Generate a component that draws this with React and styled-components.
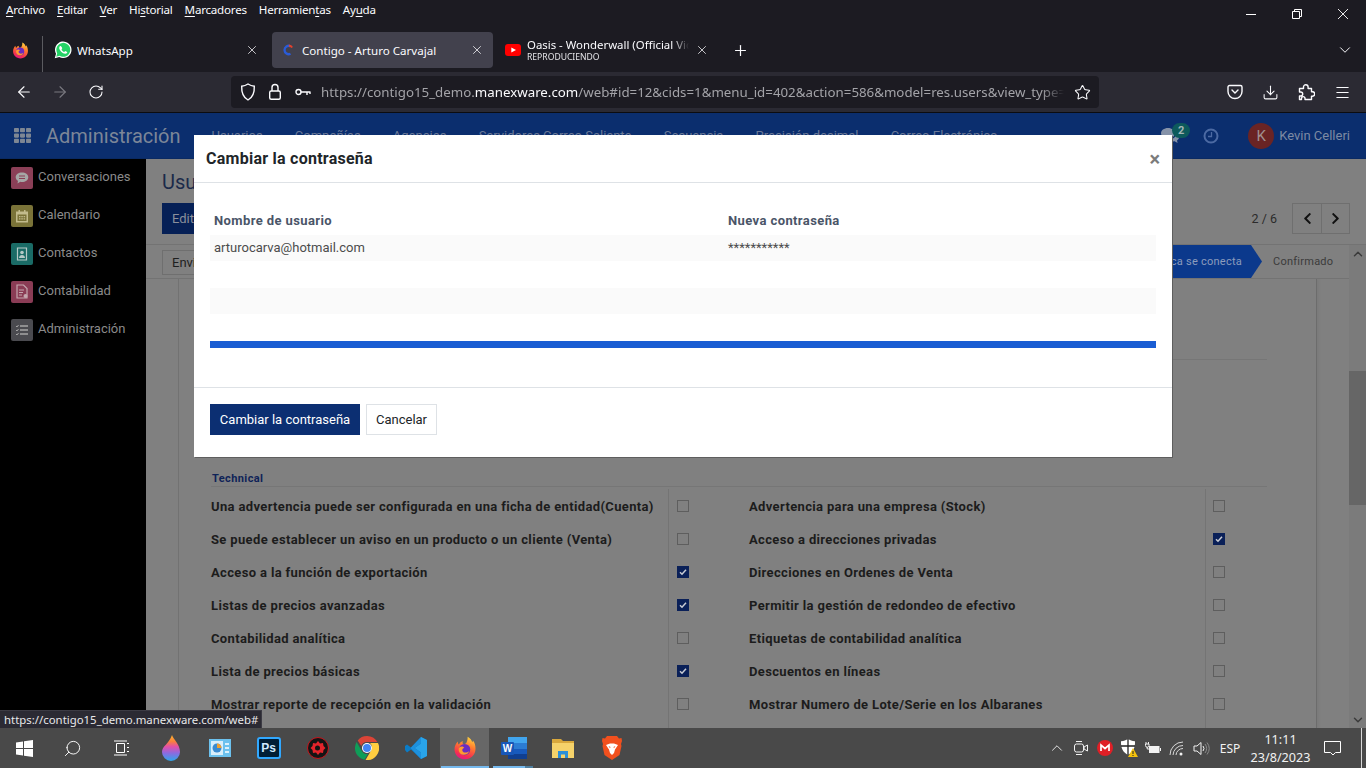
import React from "react";
import styled, { createGlobalStyle } from "styled-components";
import { ArrowLeft, ArrowRight, RotateCw, Star, Download, Menu, X, Plus, ChevronDown, ChevronUp, Search } from "lucide-react";
import { FaChevronLeft, FaChevronRight, FaTh } from "react-icons/fa";

const Global = createGlobalStyle`
  html, body { margin: 0; padding: 0; background: #1c1b22; overflow: hidden; }
  * { box-sizing: border-box; }
`;

const Page = styled.div`
  width: 1366px; height: 768px; display: flex; flex-direction: column; overflow: hidden;
  font-family: Roboto, "Liberation Sans", sans-serif;
`;

/* ---------- browser chrome ---------- */
const MenuRow = styled.div`
  height: 30px; background: #1c1b22; display: flex; align-items: flex-start;
  font-family: "Noto Sans", sans-serif; font-size: 11.6px; letter-spacing: -.23px; color: #fbfbfe;
`;
const MenuItems = styled.div`
  display: flex; gap: 12px; padding-left: 6px; line-height: 19px;
  u { text-underline-offset: 2px; text-decoration-thickness: 1px; }
`;
const WinControls = styled.div` margin-left: auto; display: flex; `;
const WinButton = styled.div`
  width: 46px; height: 28px; display: flex; align-items: center; justify-content: center; color: #fff;
`;
const TabRow = styled.div`
  height: 42px; background: #1c1b22; display: flex; align-items: flex-start;
  font-family: "Noto Sans", sans-serif; color: #fbfbfe;
`;
const FoxCell = styled.div`
  width: 43px; height: 36px; margin-top: 6px; padding: 6px 0 0 12px;
  border-right: 1px solid #5b5b60;
`;
const Tab = styled.div`
  width: ${p => p.$w}px; height: 36px; margin-top: 2px; padding: 0 ${p => p.$right}px 0 ${p => p.$pad}px;
  display: flex; align-items: center; gap: ${p => p.$gap}px; border-radius: 4px;
  background: ${p => (p.$active ? "#42414d" : "transparent")};
  font-size: 11.6px;
`;
const TabTitle = styled.div`
  flex: 1; min-width: 0; white-space: nowrap; overflow: hidden; line-height: 15px;
`;
const TabFade = styled(TabTitle)`
  font-size: 11.4px;
  -webkit-mask-image: linear-gradient(to right, #000 90%, transparent);
  mask-image: linear-gradient(to right, #000 90%, transparent);
`;
const TabSub = styled.div` font-size: 8.6px; line-height: 11px; color: #e4e4e8; `;
const NewTab = styled.div`
  width: 28px; height: 36px; margin: 2px 0 0 12px; display: flex; align-items: center; justify-content: center;
`;
const AllTabs = styled.div`
  margin: 2px 8px 0 auto; width: 26px; height: 36px; display: flex; align-items: center; justify-content: center;
`;
const NavRow = styled.div`
  height: 41px; background: #2b2a33; border-bottom: 1px solid #0c0c10; padding: 0 6px;
  display: flex; align-items: center; color: #fbfbfe;
`;
const NavButton = styled.div`
  width: 36px; height: 32px; display: flex; align-items: center; justify-content: center;
  color: ${p => (p.$off ? "#7a7980" : "#fbfbfe")};
`;
const UrlBar = styled.div`
  width: 868px; height: 32px; margin: 0 118px 0 117px; border-radius: 4px; background: #1c1b22;
  display: flex; align-items: center; padding: 0 7px 0 8px; gap: 9.5px;
  font-family: "Noto Sans", sans-serif; font-size: 13.3px; color: #a3a3a8;
`;
const UrlText = styled.div`
  flex: 1; min-width: 0; white-space: nowrap; overflow: hidden;
  -webkit-mask-image: linear-gradient(to right, #000 97%, transparent);
  mask-image: linear-gradient(to right, #000 97%, transparent);
  b { font-weight: 400; color: #fbfbfe; }
`;
const UrlIcon = styled.div` width: 18px; height: 18px; display: flex; align-items: center; justify-content: center; color: #fbfbfe; `;

/* ---------- app ---------- */
const AppArea = styled.div`
  position: relative; flex: 1; min-height: 0; display: flex; flex-direction: column; background: #808080;
`;
const NavBar = styled.div`
  height: 46px; background: #0b2e6e; border-bottom: 1px solid #0a2a63; display: flex; align-items: center;
  padding: 0 16px 0 14px; color: #7d8aa3; font-size: 13px;
`;
const AppTitle = styled.div` font-size: 20px; margin: 0 31px 0 15px; color: #7c8698; `;
const NavMenu = styled.div` display: flex; gap: 32.2px; color: #6b7a98; `;
const NavRight = styled.div` margin-left: auto; display: flex; align-items: center; `;
const ChatWrap = styled.div` position: relative; width: 20px; height: 18px; margin-right: 23px; `;
const ChatBadge = styled.div`
  position: absolute; top: -4px; left: 12px; width: 18px; height: 15px; border-radius: 8px;
  background: #0d5a5c; color: #a3b5b5; font-size: 11px; font-weight: 700; line-height: 15px; text-align: center;
`;
const Avatar = styled.div`
  width: 26px; height: 26px; border-radius: 50%; background: #6a2424; color: #a09090; margin: 0 5px 0 29px;
  display: flex; align-items: center; justify-content: center; font-size: 15px;
`;
const Body = styled.div` flex: 1; min-height: 0; display: flex; `;
const Sidebar = styled.div`
  width: 146px; background: #000; padding-top: 8px; display: flex; flex-direction: column; gap: 16px;
`;
const SideItem = styled.div`
  height: 22px; padding-left: 11px; display: flex; align-items: center; gap: 5px;
  font-size: 13px; color: #8a8a8a; white-space: nowrap;
`;
const SideLabel = styled.span` padding-bottom: 4px; `;
const SideIcon = styled.div`
  width: 22px; height: 22px; border-radius: 2px; background: ${p => p.$bg};
  display: flex; align-items: center; justify-content: center;
`;
const Main = styled.div` flex: 1; min-width: 0; display: flex; flex-direction: column; `;
const ControlPanel = styled.div`
  height: 86px; padding: 12px 16px 0; border-bottom: 1px solid #737373; display: flex; flex-direction: column; gap: 9px;
`;
const Crumb = styled.div` font-size: 20px; line-height: 23px; color: #1b2a4a; `;
const ControlRow = styled.div` display: flex; align-items: center; `;
const EditButton = styled.div`
  width: 70px; height: 31px; background: #062056; color: #8a8f9b; font-size: 13px; padding: 0 10px;
  display: flex; align-items: center;
`;
const PagerText = styled.div` margin-left: auto; margin-right: 15px; font-size: 12.5px; color: #2b2b2b; `;
const PagerGroup = styled.div` display: flex; border: 1px solid #6f6f6f; `;
const PagerButton = styled.div`
  width: 28px; height: 29px; display: flex; align-items: center; justify-content: center; color: #111;
  & + & { border-left: 1px solid #6f6f6f; }
`;
const Lower = styled.div` flex: 1; min-height: 0; display: flex; `;
const LowerMain = styled.div` flex: 1; min-width: 0; display: flex; flex-direction: column; `;
const StatusBar = styled.div`
  height: 34px; flex: none; border-bottom: 1px solid #737373; padding-left: 16px; display: flex; align-items: stretch;
`;
const SendButton = styled.div`
  width: 70px; height: 25px; margin-top: 5px; border: 1px solid #6f6f6f; padding: 0 9px;
  display: flex; align-items: center; font-size: 13px; color: #1f1f1f;
`;
const Pipeline = styled.div` margin-left: auto; display: flex; align-items: stretch; font-size: 11px; letter-spacing: .25px; `;
const StageActive = styled.div`
  width: 190px; padding: 0 20px 0 0; background: #0b398c; color: #8c9cbc; display: flex; align-items: center; justify-content: flex-end;
  clip-path: polygon(0 0, calc(100% - 11px) 0, 100% 50%, calc(100% - 11px) 100%, 0 100%);
`;
const Stage = styled.div` width: 87px; padding-left: 11px; display: flex; align-items: center; color: #3b3b3b; `;
const FormWrap = styled.div` flex: 1; min-height: 0; padding: 0 32px; overflow: hidden; background: #808080; `;
const Sheet = styled.div`
  height: 100%; border-left: 1px solid #727272; border-right: 1px solid #6c6c6c; padding: 0 49px 0 32px;
  box-shadow: 2px 0 3px rgba(0,0,0,.05);
`;
const GroupBlock = styled.div` height: ${p => p.$h}px; border-bottom: 1px solid #767676; `;
const GroupTitle = styled.div`
  height: 17px; margin-top: 110px; padding: 1px 0 0 1px; border-bottom: 1px solid #767676;
  font-size: 11px; font-weight: 700; line-height: 15px; letter-spacing: .4px; color: #0f2358;
`;
const Rows = styled.div`
  margin-top: 2px; display: grid; grid-template-columns: 457px 81px 456px 1fr; grid-auto-rows: 33px;
`;
const RowLabel = styled.div`
  display: flex; align-items: center; padding-top: 2px; font-size: 13px; font-weight: 700; letter-spacing: .35px;
  color: #1c1c1c; white-space: nowrap;
`;
const RowCheck = styled.div`
  border-left: 1px solid #747474; padding-left: ${p => p.$pad}px; display: flex; align-items: center;
`;
const Check = styled.div`
  width: 12px; height: 12px; border: 1px solid ${p => (p.$on ? "#0a2058" : "#5e5e5e")};
  background: ${p => (p.$on ? "#0a2058" : "transparent")};
  display: flex; align-items: center; justify-content: center;
`;
const ScrollBar = styled.div`
  width: 17px; flex: none; background: #7b7b7b; display: flex; flex-direction: column; align-items: center; color: #3b3b3b;
`;
const ScrollEnd = styled.div` height: 17px; flex: none; display: flex; align-items: center; justify-content: center; `;
const ScrollThumb = styled.div` width: 17px; height: 134px; background: #666; margin-top: 109px; `;
const ScrollSpacer = styled.div` flex: 1; `;

/* ---------- modal ---------- */
const Modal = styled.div`
  position: absolute; left: 194px; top: 22px; width: 978px; height: 322px; background: #fff;
  box-shadow: 1px 1px 0 #5e5e5e; display: flex; flex-direction: column;
`;
const ModalHead = styled.div`
  height: 48px; flex: none; border-bottom: 1px solid #dee2e6; padding: 0 12px; display: flex; align-items: center; justify-content: space-between;
`;
const ModalTitle = styled.div` font-size: 16px; font-weight: 700; letter-spacing: .25px; color: #212529; `;
const ModalClose = styled.div` font-size: 20px; font-weight: 700; color: #7b7b7b; line-height: 1; `;
const ModalBody = styled.div` height: 204px; flex: none; padding: 22px 16px 0; `;
const PwTable = styled.div` display: grid; grid-template-columns: 514px 432px; color: #4c4c4c; font-size: 13px; `;
const PwHead = styled.div`
  height: 30px; padding: 1px 4px 0; font-weight: 700; letter-spacing: .4px; color: #4a5568; line-height: 30px;
`;
const PwCell = styled.div`
  height: ${p => p.$h}px; padding: 0 4px; line-height: ${p => p.$h}px; background: ${p => (p.$tint ? "#fafafa" : "transparent")};
`;
const Progress = styled.div` height: 7px; background: #1a5dd3; `;
const ModalFoot = styled.div`
  flex: 1; border-top: 1px solid #dee2e6; padding: 16px 16px 0; display: flex; gap: 6px; align-items: flex-start; font-size: 13px;
`;
const PrimaryButton = styled.div`
  height: 31px; width: 150px; background: #0c2f72; color: #fff; display: flex; align-items: center; justify-content: center;
`;
const SecondaryButton = styled.div`
  height: 31px; width: 71px; background: #fff; color: #212529; border: 1px solid #dee2e6; display: flex; align-items: center; justify-content: center;
`;
const StatusTip = styled.div`
  position: absolute; left: 0; bottom: 0; width: 262px; height: 18px; background: #2b2a33; color: #e8e8ea;
  border: 1px solid #3c3b44; border-width: 1px 1px 0 0; padding-left: 4px;
  font-family: "Noto Sans", sans-serif; font-size: 11.4px; line-height: 17px; white-space: nowrap;
`;

/* ---------- taskbar ---------- */
const Taskbar = styled.div`
  height: 40px; flex: none; background: #494949; display: flex; align-items: stretch; color: #fff;
`;
const TaskCell = styled.div`
  position: relative; width: ${p => p.$w || 49}px; display: flex; align-items: center; justify-content: center;
  background: ${p => (p.$active ? "#676767" : "transparent")};
`;
const FullLine = styled.div`
  position: absolute; left: 1px; right: 0; bottom: 0; height: 2px; background: #76b9ed;
`;
const StackLine = styled.div`
  position: absolute; left: 4px; width: 40px; bottom: 0; height: 2px;
  background: linear-gradient(to right, #76b9ed 80%, #4f7f9f 80%);
`;
const PsTile = styled.div`
  width: 24px; height: 22px; border: 2px solid #31a8ff; border-radius: 3px; background: #001e36; color: #cfe9ff;
  font-family: "Liberation Sans", sans-serif; font-weight: 700; font-size: 12px; line-height: 18px; text-align: center;
`;
const WordStackWrap = styled.div` margin-left: 7px; display: flex; `;
const WordTile = styled.div`
  position: absolute; left: 12px; top: 14px; width: 13px; height: 13px; background: #1857b8; color: #fff; border-radius: 1px;
  font-family: "Liberation Sans", sans-serif; font-weight: 700; font-size: 10px; line-height: 13px; text-align: center;
`;
const Tray = styled.div` margin-left: auto; display: flex; align-items: center; font-family: "Noto Sans", sans-serif; font-size: 12px; color: #f2f2f2; `;
const TrayIcon = styled.div` width: 24px; height: 40px; display: flex; align-items: center; justify-content: center; `;
const Lang = styled.div` width: 34px; text-align: center; `;
const Clock = styled.div` width: 61px; margin-left: 3px; padding-top: 1px; text-align: center; line-height: 18px; font-size: 12.6px; white-space: nowrap; `;
const Notify = styled.div` width: 50px; height: 40px; padding-right: 8px; display: flex; align-items: center; justify-content: center; `;
const Desktop = styled.div` width: 5px; height: 40px; border-left: 1px solid #d8d8d8; `;

/* ---------- drawings ---------- */
const Firefox = ({ s }) => (
  <svg width={s} height={s} viewBox="0 0 32 32">
    <defs>
      <linearGradient id={`fx${s}`} x1="0.7" y1="0" x2="0.35" y2="1">
        <stop offset="0" stopColor="#ffd53d" />
        <stop offset=".4" stopColor="#ff7a2f" />
        <stop offset=".8" stopColor="#f5304f" />
        <stop offset="1" stopColor="#e31587" />
      </linearGradient>
    </defs>
    <path fill={`url(#fx${s})`} d="M16 31C8 31 2 25 2 17.500c0-4 1.800-7.800 4.600-10.300-.2 2 .3 3.400 1.200 4.200C9.200 8.600 11.600 7 13.500 7c-1 1.500-1 3 .2 3.600 2.400 1.200 6-1.500 5.800-9.600 3.700 2 5.500 4.800 6.100 7.300.5-.5.900-1.200 1-2.200 2.500 2.700 3.400 6.600 3.400 11C30 25 23.800 31 16 31z" />
    <circle cx="15.500" cy="18" r="7.500" fill="#6b2bc0" />
    <path fill="#ff9a2e" d="M8 15.500c3-2.500 6.500-1.500 7 .5-2 .5-3 1.500-2.500 3.500 1 3 6 3.500 9 .5-1 4-5 5.500-8 5-4.500-.8-7-5.500-5.500-9.500z" />
  </svg>
);
const WhatsApp = () => (
  <svg width="18" height="18" viewBox="0 0 24 24">
    <path fill="#fff" d="M1 23l1.700-6A11 11 0 1 1 7 21.300z" />
    <path fill="#25d366" d="M3 21l1.300-4.600A9.300 9.300 0 1 1 7.500 19.700z" />
    <path fill="#fff" d="M8.500 6.800c-.5 0-1.500.8-1.500 2.500 0 3 4.500 7.700 8 7.700 1.700 0 2.700-1.200 2.700-2 0-.5-2.300-1.700-2.700-1.700-.4 0-1 1.200-1.400 1.200-1 0-3.500-2.300-3.500-3.300 0-.5.9-1 .9-1.500S9.500 6.800 8.500 6.800z" />
  </svg>
);
const ContigoFav = () => (
  <svg width="10" height="12" viewBox="0 0 12 14">
    <path d="M9 2.500A5 5 0 1 0 9 11.500" fill="none" stroke="#2a5bd7" strokeWidth="2.800" />
    <path d="M7 1.500A5 5 0 0 1 11 4" fill="none" stroke="#e5402b" strokeWidth="2.400" />
  </svg>
);
const YouTube = () => (
  <svg width="16" height="12" viewBox="0 0 16 12">
    <rect width="16" height="12" rx="3" fill="#f00" />
    <path d="M6.300 3.400L11 6l-4.700 2.600z" fill="#fff" />
  </svg>
);
const Shield = () => (
  <svg width="16" height="18" viewBox="0 0 16 18" fill="none" stroke="#fbfbfe" strokeWidth="1.400">
    <path d="M8 1c2 1.300 4 2 6.300 2.200.3 6.500-1.300 11-6.300 13.800C3 14.200 1.400 9.700 1.700 3.200 4 3 6 2.300 8 1z" />
  </svg>
);
const LockIcon = () => (
  <svg width="14" height="18" viewBox="0 0 14 18" fill="none" stroke="#fbfbfe" strokeWidth="1.400">
    <rect x="1.700" y="8" width="10.600" height="8.300" rx="1.500" />
    <path d="M4 8V4.500a3 3 0 0 1 6 0V8" />
  </svg>
);
const KeyIcon = () => (
  <svg width="16" height="10" viewBox="0 0 16 10" fill="none" stroke="#fbfbfe" strokeWidth="1.400">
    <circle cx="3.500" cy="5" r="2.500" />
    <path d="M6 5h9.500M12 5v3M15 5v2" />
  </svg>
);
const Pocket = () => (
  <svg width="16" height="16" viewBox="0 0 16 16" fill="none" stroke="#fbfbfe" strokeWidth="1.400">
    <path d="M2.500 1.500h11A1.500 1.500 0 0 1 15 3v4.500a7 7 0 0 1-14 0V3a1.500 1.500 0 0 1 1.500-1.500z" />
    <path d="M5 6l3 3 3-3" strokeLinecap="round" />
  </svg>
);
const Extension = () => (
  <svg width="17" height="18" viewBox="0 0 17 18" fill="none" stroke="#fbfbfe" strokeWidth="1.400" strokeLinejoin="round">
    <path d="M1.500 5.500h4V4a2.300 2.300 0 0 1 4.600 0v1.500h3.400v3.300h1a2.200 2.200 0 0 1 0 4.400h-1v3.300H7v-1.500a1.800 1.800 0 0 0-3.500 0v1.500h-2v-3.500h1.200a2 2 0 0 0 0-4H1.500z" />
  </svg>
);
const Chat = () => (
  <svg width="20" height="18" viewBox="0 0 20 18" fill="#8592a8">
    <path d="M8 1c4 0 7 2.300 7 5.300s-3 5.200-7 5.200c-.8 0-1.500-.1-2.200-.3L2.500 13l.8-3C1.800 9 1 7.700 1 6.300 1 3.300 4 1 8 1z" />
    <path d="M16 6.500c1.800.8 3 2.200 3 3.800 0 1.300-.7 2.400-2 3.200l.6 2.500-3-1.700c-2.500.4-5-.3-6.300-2 4.200.3 8-2 7.700-5.800z" />
  </svg>
);
const ClockIcon = () => (
  <svg width="16" height="16" viewBox="0 0 16 16" fill="none" stroke="#4c6aa3" strokeWidth="2">
    <circle cx="8" cy="8" r="6.500" />
    <path d="M8.500 4v4.500H5" strokeWidth="1.300" />
  </svg>
);
const SideGlyph = ({ kind }) => {
  const c = "#a6a6a6";
  if (kind === "chat") return <svg width="14" height="14" viewBox="0 0 14 14"><path fill={c} d="M7 1.500c3.500 0 6.300 2 6.300 4.700S10.500 11 7 11c-.6 0-1.100 0-1.700-.2L2.500 12.500l.5-2.700C1.500 9 .7 7.700.7 6.200.7 3.500 3.500 1.500 7 1.500z" /><path stroke="#8b3f57" d="M4 5h6M4 7.500h6" /></svg>;
  if (kind === "cal") return <svg width="14" height="14" viewBox="0 0 14 14"><path fill="#c2bb8c" d="M1 2.500h12v11H1z" /><path fill="#7a7338" d="M2.500 5.500h9v6.500h-9z" /><path fill="#c2bb8c" d="M3.500 1h1.500v3H3.500zM9 1h1.500v3H9zM4 7h1.500v1.200H4zM6.300 7h1.500v1.200H6.300zM8.600 7h1.500v1.200H8.600zM4 9.300h1.500v1.200H4zM6.300 9.300h1.500v1.200H6.300zM8.600 9.300h1.500v1.200H8.600z" /></svg>;
  if (kind === "contact") return <svg width="14" height="14" viewBox="0 0 14 14"><path fill="none" stroke="#b5c9c6" strokeWidth="1.200" d="M2.500 1h9v12h-9z" /><circle cx="7" cy="5.500" r="1.800" fill="#b5c9c6" /><path fill="#b5c9c6" d="M4 11c0-2 1.300-3 3-3s3 1 3 3z" /></svg>;
  if (kind === "acc") return <svg width="14" height="16" viewBox="0 0 14 16"><path fill="none" stroke="#c4a6ae" strokeWidth="1.200" d="M2 1h6.500L12 4.500V14H2z" /><path stroke="#c4a6ae" d="M4 6h5M4 8.500h4M4 11h3" /><circle cx="10.500" cy="12" r="2" fill="#c4a6ae" /></svg>;
  return <svg width="14" height="12" viewBox="0 0 14 12"><path stroke="#a5a5a5" strokeWidth="1.300" d="M5 2h8M5 6h8M5 10h8" /><path stroke="#a5a5a5" fill="none" d="M1 2l1 1 1.500-2M1 6l1 1 1.500-2M1 10l1 1 1.500-2" /></svg>;
};
const Tick = () => (
  <svg width="8" height="8" viewBox="0 0 8 8"><path d="M1 4.200l2 2L7 1.800" fill="none" stroke="#c9ccd4" strokeWidth="1.500" /></svg>
);
const WinLogo = () => (
  <svg width="17" height="17" viewBox="0 0 17 17" fill="#fff"><path d="M0 2.400l7-1v6.600H0zM8 1.200L17 0v8H8zM0 9h7v6.600l-7-1zM8 9h9v8l-9-1.200z" /></svg>
);
const TaskView = () => (
  <svg width="16" height="16" viewBox="0 0 16 16" fill="none" stroke="#fff"><path d="M3.500 3.500h8v9h-8zM1 1h13M1 15h13M14 3.500h2M14 7.500h2M14 11.500h2" /></svg>
);
const Drop = () => (
  <svg width="20" height="28" viewBox="0 0 20 28">
    <defs>
      <linearGradient id="dp" x1="0" y1="0" x2="0" y2="1">
        <stop offset="0" stopColor="#ffb52e" /><stop offset=".25" stopColor="#f9803d" />
        <stop offset=".45" stopColor="#e34fa8" /><stop offset=".7" stopColor="#8a6be0" /><stop offset="1" stopColor="#2ca8ea" />
      </linearGradient>
    </defs>
    <path fill="url(#dp)" d="M11 1c1 4 8 9 8 17a9 9 0 0 1-18 0C1 12 8 10 11 1z" />
  </svg>
);
const Pres = () => (
  <svg width="22" height="18" viewBox="0 0 22 18">
    <rect width="22" height="18" fill="#6cc1ee" />
    <rect x="2" y="2" width="12" height="14" fill="#d8eefb" />
    <circle cx="8" cy="9" r="4.500" fill="#3a8bd1" /><path d="M8 9V4.500A4.500 4.500 0 0 1 12.500 9z" fill="#f0a030" />
    <path stroke="#fff" strokeWidth="1.500" d="M16 5h4M16 9h4M16 13h4" />
  </svg>
);
const Iobit = () => (
  <svg width="22" height="22" viewBox="0 0 22 22">
    <circle cx="11" cy="11" r="10.500" fill="#141414" stroke="#c8161d" strokeWidth="1" />
    <path fill="#e3242b" d="M11 4l2 2.500 3-.5.500 3 2 2-2 2-.5 3-3-.5-2 2.500-2-2.500-3 .5-.5-3-2-2 2-2 .5-3 3 .5z" />
    <circle cx="10.500" cy="11" r="2.500" fill="#141414" />
  </svg>
);
const Chrome = () => (
  <svg width="24" height="24" viewBox="0 0 24 24">
    <path fill="#db4437" d="M12 0a12 12 0 0 1 10.400 6H12a6 6 0 0 0-5.700 4.100L2.700 4.400A12 12 0 0 1 12 0z" />
    <path fill="#0f9d58" d="M1.600 6l5.200 9a6 6 0 0 0 6.200 3l-3.600 5.800A12 12 0 0 1 1.600 6z" />
    <path fill="#ffcd40" d="M23 7a12 12 0 0 1-12.500 16.900L15.800 15a6 6 0 0 0-.8-8z" />
    <circle cx="12" cy="12" r="5" fill="#fff" /><circle cx="12" cy="12" r="4" fill="#4285f4" />
  </svg>
);
const VSCode = () => (
  <svg width="24" height="24" viewBox="0 0 24 24">
    <path fill="#0a7cc7" d="M17 1l6 3v16l-6 3-10-9.500-4 3L1 14V10l2-1.500 4 3z" />
    <path fill="#29a4ea" d="M17 1l6 3v16l-6 3V16.500L10.500 12 17 7.500z" />
    <path fill="#1e90dc" d="M7 11.500L17 1v6.500L10.500 12 17 16.500V23L7 12.500z" />
  </svg>
);
const WordStack = () => (
  <svg width="20" height="22" viewBox="0 0 20 22">
    <path fill="#41a5ee" d="M1 0h19v6H1z" /><path fill="#2b7cd3" d="M1 6h19v6H1z" />
    <path fill="#185abd" d="M1 12h19v5H1z" /><path fill="#103f91" d="M1 17h19v5H1z" />
  </svg>
);
const Folder = () => (
  <svg width="22" height="20" viewBox="0 0 22 20">
    <path fill="#d9a83c" d="M0 1h9l2 2h11v4H0z" />
    <path fill="#f5d26a" d="M0 5h22v15H0z" />
    <path fill="#2b8fd8" d="M6 13h10v7h-3v-3.500H9V20H6z" />
  </svg>
);
const Brave = () => (
  <svg width="20" height="24" viewBox="0 0 20 24">
    <path fill="#f1501e" d="M5 0h10l2 2.500 2.500-.5L20 5l-1 3 .5 2-2 9-7.500 5-7.500-5-2-9 .5-2-1-3 .5-3 2.500.5z" />
    <path fill="#fff" d="M4 9l4-1.500h4L16 9l-3 4.500-1 3.500-2 2-2-2-1-3.500z" />
    <path fill="#f1501e" d="M6.500 10l2 1-.5 1.200zM13.500 10l-2 1 .5 1.200z" />
  </svg>
);
const Mega = () => (
  <svg width="16" height="16" viewBox="0 0 16 16"><circle cx="8" cy="8" r="8" fill="#e01f26" /><path d="M4 11V5l4 3.500L12 5v6" fill="none" stroke="#fff" strokeWidth="1.700" /></svg>
);
const Meet = () => (
  <svg width="14" height="16" viewBox="0 0 14 16" fill="none" stroke="#f2f2f2"><rect x=".5" y="4" width="9" height="8" rx="2" /><path d="M10 7l3.500-2v6L10 9zM2 1.500h6M2 14.500h6" /></svg>
);
const DefShield = () => (
  <svg width="18" height="18" viewBox="0 0 18 18">
    <path fill="#fff" d="M8 0c2 1.300 4 2 7 2.300.3 6.500-1.800 11-7 13.700C2.800 13.300.7 8.800 1 2.300 4 2 6 1.300 8 0z" />
    <path stroke="#222" strokeWidth="1.300" d="M8 0v16M1 7h14" />
    <path fill="#f4c20d" d="M13 9l5 9H8z" /><path stroke="#222" d="M13 12v3M13 16v1" />
  </svg>
);
const Battery = () => (
  <svg width="16" height="14" viewBox="0 0 16 14" fill="#f2f2f2"><path d="M4 5h10.500v7H4zM15 7h1v3h-1z" /><path stroke="#f2f2f2" fill="none" d="M1 1v2M3.500 1v2M.5 3h3.500v1.500a1.700 1.700 0 0 1-3.500 0zM2.200 6v2h2" /></svg>
);
const Wifi = () => (
  <svg width="17" height="15" viewBox="0 0 17 15" fill="none" stroke="#d8d8d8"><path d="M1 14A13 13 0 0 1 14 1M4 14A10 10 0 0 1 14 4.500M7 14a7 7 0 0 1 7-6.500" /><circle cx="12" cy="13" r="1.500" fill="#f2f2f2" stroke="none" /></svg>
);
const Volume = () => (
  <svg width="17" height="15" viewBox="0 0 17 15" fill="none" stroke="#f2f2f2"><path d="M1 5h3l4-3.500v12L4 10H1z" /><path d="M10 5a4 4 0 0 1 0 5" /><path stroke="#8a8a8a" d="M12 3a7 7 0 0 1 0 9M14 1.500a10 10 0 0 1 0 12" /></svg>
);
const Speech = () => (
  <svg width="17" height="15" viewBox="0 0 17 15" fill="none" stroke="#fff"><path d="M.5.500h16v11h-5L9 14l-2.500-2.500h-6z" /></svg>
);

const rows = [
  ["Una advertencia puede ser configurada en una ficha de entidad(Cuenta)", false, "Advertencia para una empresa (Stock)", false],
  ["Se puede establecer un aviso en un producto o un cliente (Venta)", false, "Acceso a direcciones privadas", true],
  ["Acceso a la función de exportación", true, "Direcciones en Ordenes de Venta", false],
  ["Listas de precios avanzadas", true, "Permitir la gestión de redondeo de efectivo", false],
  ["Contabilidad analítica", false, "Etiquetas de contabilidad analítica", false],
  ["Lista de precios básicas", true, "Descuentos en líneas", false],
  ["Mostrar reporte de recepción en la validación", false, "Mostrar Numero de Lote/Serie en los Albaranes", false],
];
const sideItems = [
  ["Conversaciones", "#8b3f57", "chat"],
  ["Calendario", "#7a7338", "cal"],
  ["Contactos", "#1a6b66", "contact"],
  ["Contabilidad", "#8a3c55", "acc"],
  ["Administración", "#4a4a4f", "admin"],
];
const navItems = ["Usuarios", "Compañías", "Agencias", "Servidores Correo Saliente", "Secuencia", "Precisión decimal", "Correo Electrónico"];

export default function App() {
  return (
    <Page>
      <Global />
      <MenuRow>
        <MenuItems>
          <span><u>A</u>rchivo</span>
          <span><u>E</u>ditar</span>
          <span><u>V</u>er</span>
          <span>Hi<u>s</u>torial</span>
          <span><u>M</u>arcadores</span>
          <span>Herramien<u>t</u>as</span>
          <span>Ay<u>u</u>da</span>
        </MenuItems>
        <WinControls>
          <WinButton><svg width="10" height="10" viewBox="0 0 10 10"><path d="M0 5.500h10" stroke="#fff" /></svg></WinButton>
          <WinButton><svg width="10" height="10" viewBox="0 0 10 10" fill="none" stroke="#fff"><path d="M.5 2.500h7v7h-7zM2.500 2.500v-2h7v7h-2" /></svg></WinButton>
          <WinButton><svg width="10" height="10" viewBox="0 0 10 10"><path d="M0 0l10 10M10 0L0 10" stroke="#fff" strokeWidth=".9" /></svg></WinButton>
        </WinControls>
      </MenuRow>
      <TabRow>
        <FoxCell><Firefox s={17} /></FoxCell>
        <Tab $w={229} $pad={11} $right={13} $gap={5}>
          <WhatsApp /><TabTitle>WhatsApp</TabTitle><X size={14} strokeWidth={1.3} />
        </Tab>
        <Tab $w={221} $pad={11} $right={9} $gap={9} $active>
          <ContigoFav /><TabTitle>Contigo - Arturo Carvajal</TabTitle><X size={14} strokeWidth={1.3} />
        </Tab>
        <Tab $w={221} $pad={12} $right={5} $gap={6}>
          <YouTube />
          <TabFade>Oasis - Wonderwall (Official Video)<TabSub>REPRODUCIENDO</TabSub></TabFade>
          <X size={14} strokeWidth={1.3} />
        </Tab>
        <NewTab><Plus size={17} strokeWidth={1.7} /></NewTab>
        <AllTabs><ChevronDown size={18} strokeWidth={1.3} /></AllTabs>
      </TabRow>
      <NavRow>
        <NavButton><ArrowLeft size={18} strokeWidth={1.5} /></NavButton>
        <NavButton $off><ArrowRight size={18} strokeWidth={1.5} /></NavButton>
        <NavButton><RotateCw size={16} strokeWidth={1.6} /></NavButton>
        <UrlBar>
          <UrlIcon><Shield /></UrlIcon>
          <UrlIcon><LockIcon /></UrlIcon>
          <UrlIcon><KeyIcon /></UrlIcon>
          <UrlText>https://contigo15_demo.<b>manexware.com</b>/web#id=12&amp;cids=1&amp;menu_id=402&amp;action=586&amp;model=res.users&amp;view_type=</UrlText>
          <UrlIcon><Star size={17} strokeWidth={1.5} /></UrlIcon>
        </UrlBar>
        <NavButton><Pocket /></NavButton>
        <NavButton><Download size={17} strokeWidth={1.5} /></NavButton>
        <NavButton><Extension /></NavButton>
        <NavButton><Menu size={17} strokeWidth={1.5} /></NavButton>
      </NavRow>

      <AppArea>
        <NavBar>
          <FaTh size={17} color="#7e8794" />
          <AppTitle>Administración</AppTitle>
          <NavMenu>{navItems.map(n => <span key={n}>{n}</span>)}</NavMenu>
          <NavRight>
            <ChatWrap><Chat /><ChatBadge>2</ChatBadge></ChatWrap>
            <ClockIcon />
            <Avatar>K</Avatar>
            <span>Kevin Celleri</span>
          </NavRight>
        </NavBar>
        <Body>
          <Sidebar>
            {sideItems.map(([t, bg, k]) => (
              <SideItem key={t}><SideIcon $bg={bg}><SideGlyph kind={k} /></SideIcon><SideLabel>{t}</SideLabel></SideItem>
            ))}
          </Sidebar>
          <Main>
            <ControlPanel>
              <Crumb>Usuarios</Crumb>
              <ControlRow>
                <EditButton>Editar</EditButton>
                <PagerText>2 / 6</PagerText>
                <PagerGroup>
                  <PagerButton><FaChevronLeft size={13} /></PagerButton>
                  <PagerButton><FaChevronRight size={13} /></PagerButton>
                </PagerGroup>
              </ControlRow>
            </ControlPanel>
            <Lower>
              <LowerMain>
                <StatusBar>
                  <SendButton>Enviar</SendButton>
                  <Pipeline>
                    <StageActive>Nunca se conecta</StageActive>
                    <Stage>Confirmado</Stage>
                  </Pipeline>
                </StatusBar>
                <FormWrap>
                  <Sheet>
                    <GroupBlock $h={81} />
                    <GroupTitle>Technical</GroupTitle>
                    <Rows>
                      {rows.map(([a, ca, b, cb]) => (
                        <React.Fragment key={a}>
                          <RowLabel>{a}</RowLabel>
                          <RowCheck $pad={8}><Check $on={ca}>{ca && <Tick />}</Check></RowCheck>
                          <RowLabel>{b}</RowLabel>
                          <RowCheck $pad={7}><Check $on={cb}>{cb && <Tick />}</Check></RowCheck>
                        </React.Fragment>
                      ))}
                      <RowLabel />
                      <RowCheck $pad={8} />
                      <RowLabel />
                      <RowCheck $pad={7} />
                    </Rows>
                  </Sheet>
                </FormWrap>
              </LowerMain>
              <ScrollBar>
                <ScrollEnd><ChevronUp size={14} strokeWidth={2.5} /></ScrollEnd>
                <ScrollThumb />
                <ScrollSpacer />
                <ScrollEnd><ChevronDown size={14} strokeWidth={2.5} /></ScrollEnd>
              </ScrollBar>
            </Lower>
          </Main>
        </Body>

        <Modal>
          <ModalHead>
            <ModalTitle>Cambiar la contraseña</ModalTitle>
            <ModalClose>×</ModalClose>
          </ModalHead>
          <ModalBody>
            <PwTable>
              <PwHead>Nombre de usuario</PwHead>
              <PwHead>Nueva contraseña</PwHead>
              <PwCell $h={26} $tint>arturocarva@hotmail.com</PwCell>
              <PwCell $h={26} $tint>***********</PwCell>
              <PwCell $h={27} />
              <PwCell $h={27} />
              <PwCell $h={26} $tint />
              <PwCell $h={26} $tint />
              <PwCell $h={27} />
              <PwCell $h={27} />
            </PwTable>
            <Progress />
          </ModalBody>
          <ModalFoot>
            <PrimaryButton>Cambiar la contraseña</PrimaryButton>
            <SecondaryButton>Cancelar</SecondaryButton>
          </ModalFoot>
        </Modal>
        <StatusTip>https://contigo15_demo.manexware.com/web#</StatusTip>
      </AppArea>

      <Taskbar>
        <TaskCell $w={48}><WinLogo /></TaskCell>
        <TaskCell $w={48}><Search size={19} strokeWidth={1.2} style={{ transform: "scaleX(-1)" }} /></TaskCell>
        <TaskCell $w={50}><TaskView /></TaskCell>
        <TaskCell><Drop /></TaskCell>
        <TaskCell><Pres /></TaskCell>
        <TaskCell><PsTile>Ps</PsTile></TaskCell>
        <TaskCell><Iobit /></TaskCell>
        <TaskCell><Chrome /></TaskCell>
        <TaskCell><VSCode /></TaskCell>
        <TaskCell $active><Firefox s={24} /><FullLine /></TaskCell>
        <TaskCell><WordStackWrap><WordStack /></WordStackWrap><WordTile>W</WordTile><StackLine /></TaskCell>
        <TaskCell><Folder /></TaskCell>
        <TaskCell><Brave /></TaskCell>
        <Tray>
          <TrayIcon><ChevronUp size={18} strokeWidth={1.2} /></TrayIcon>
          <TrayIcon><Meet /></TrayIcon>
          <TrayIcon><Mega /></TrayIcon>
          <TrayIcon><DefShield /></TrayIcon>
          <TrayIcon><Battery /></TrayIcon>
          <TrayIcon><Wifi /></TrayIcon>
          <TrayIcon><Volume /></TrayIcon>
          <Lang>ESP</Lang>
          <Clock>11:11<br />23/8/2023</Clock>
          <Notify><Speech /></Notify>
          <Desktop />
        </Tray>
      </Taskbar>
    </Page>
  );
}
